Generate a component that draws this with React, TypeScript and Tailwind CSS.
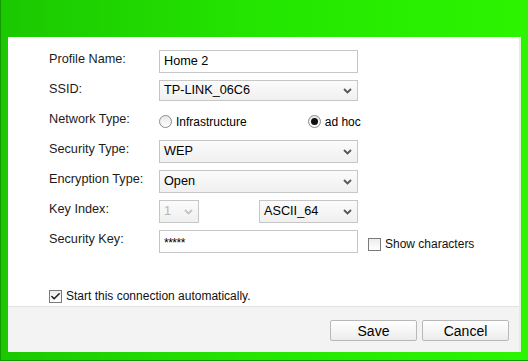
import { Check } from "lucide-react";

const label = "w-[110px] shrink-0 mt-px leading-4 text-[12.7px] text-[#1c1c1c]";

function Chevron({ muted = false }: { muted?: boolean }) {
  return (
    <svg width="9" height="6" viewBox="0 0 9 6" className="shrink-0">
      <path
        d="M1 1 L4.5 4.5 L8 1"
        fill="none"
        stroke={muted ? "#c4c4c4" : "#555"}
        strokeWidth="1.8"
      />
    </svg>
  );
}

function Select({ value, width, disabled = false }: { value: string; width: string; disabled?: boolean }) {
  return (
    <div
      className={`${width} h-full flex items-center justify-between pl-[4px] pr-[5px] border border-[#c6c6c6] bg-gradient-to-b from-[#fbfbfb] to-[#f0f0f0] ${
        disabled ? "text-[#b5b5b5]" : "text-black"
      }`}
    >
      <span className="text-[12.7px] leading-none">{value}</span>
      <Chevron muted={disabled} />
    </div>
  );
}

function Radio({ checked, text }: { checked: boolean; text: string }) {
  return (
    <div className="flex items-center gap-[4px]">
      <div className="w-[13px] h-[13px] rounded-full border border-[#8a8a8a] bg-gradient-to-b from-[#e8e8e8] to-white flex items-center justify-center">
        {checked && <div className="w-[7px] h-[7px] rounded-full bg-[#111]" />}
      </div>
      <span className="text-[12px] text-black">{text}</span>
    </div>
  );
}

function Box({ checked, text }: { checked: boolean; text: string }) {
  return (
    <div className="flex items-center gap-[4px]">
      <div className="w-[13px] h-[13px] border border-[#7a7a7a] bg-gradient-to-b from-[#ececec] to-white flex items-center justify-center">
        {checked && <Check size={11} strokeWidth={3.5} color="#222" />}
      </div>
      <span className="text-[12px] text-[#111]">{text}</span>
    </div>
  );
}

export default function App() {
  return (
    <div
      className="w-[528px] h-[361px] flex flex-col pt-[37px] pl-[7px] pr-[7px] pb-[8px] bg-gradient-to-r from-[#1bc800] via-[#24e600] to-[#2cf500] border-l border-b border-[#0f9a00]"
      style={{ fontFamily: '"Liberation Sans", Arial, sans-serif' }}
    >
      <div className="flex-1 flex flex-col bg-white border-r-2 border-[#d8f7cf]">
        <div className="flex-1 flex flex-col pt-[13px] pl-[41px] gap-[7px]">
          <div className="flex items-start h-[23px]">
            <span className={label}>Profile Name:</span>
            <div className="w-[199px] h-full flex items-center px-[4px] border border-[#c6c6c6] text-[12.7px] text-black">
              Home 2
            </div>
          </div>
          <div className="flex items-start h-[21px] mb-[2px]">
            <span className={label}>SSID:</span>
            <Select value="TP-LINK_06C6" width="w-[199px]" />
          </div>
          <div className="flex items-start h-[23px]">
            <span className={label}>Network Type:</span>
            <div className="flex items-center h-full gap-[61px]">
              <Radio checked={false} text="Infrastructure" />
              <Radio checked text="ad hoc" />
            </div>
          </div>
          <div className="flex items-start h-[23px]">
            <span className={label}>Security Type:</span>
            <Select value="WEP" width="w-[199px]" />
          </div>
          <div className="flex items-start h-[23px]">
            <span className={label}>Encryption Type:</span>
            <Select value="Open" width="w-[199px]" />
          </div>
          <div className="flex items-start h-[23px]">
            <span className={label}>Key Index:</span>
            <div className="flex h-full gap-[60px]">
              <Select value="1" width="w-[40px]" disabled />
              <Select value="ASCII_64" width="w-[99px]" />
            </div>
          </div>
          <div className="flex items-start h-[23px]">
            <span className={label}>Security Key:</span>
            <div className="w-[199px] h-full flex items-center px-[4px] pt-[2px] border border-[#c6c6c6] text-[12px] tracking-[-0.5px] text-black">
              *****
            </div>
            <div className="ml-[10px] mt-[5px]">
              <Box checked={false} text="Show characters" />
            </div>
          </div>
          <div className="mt-[27px]">
            <Box checked text="Start this connection automatically." />
          </div>
        </div>
        <div className="h-[46px] flex justify-end items-start pt-[13px] pr-[10px] gap-[5px] bg-[#f3f3f3] border-t border-[#e2e2e2]">
          <button className="w-[87px] h-[21px] border border-[#b8b8b8] rounded-[2px] bg-gradient-to-b from-white to-[#ececec] text-[14px] text-black leading-none">
            Save
          </button>
          <button className="w-[87px] h-[21px] border border-[#b8b8b8] rounded-[2px] bg-gradient-to-b from-white to-[#ececec] text-[14px] text-black leading-none">
            Cancel
          </button>
        </div>
      </div>
    </div>
  );
}
